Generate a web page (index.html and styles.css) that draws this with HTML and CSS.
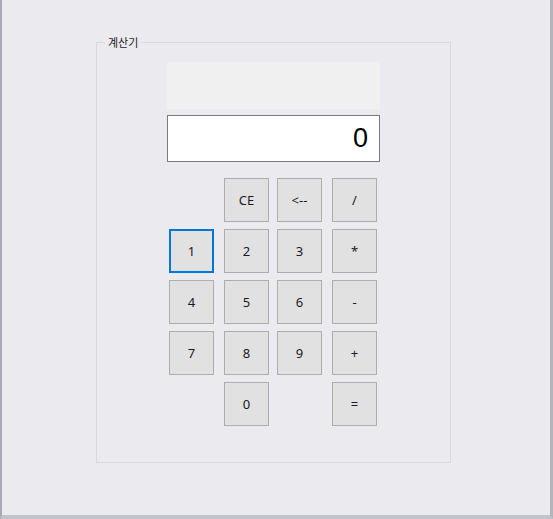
FILE: index.html
```html
<!DOCTYPE html>
<html lang="ko">

<head>
    <meta charset="UTF-8">
    <meta name="viewport" content="width=device-width, initial-scale=1.0">
    <title>계산기</title>
    <link rel="stylesheet" href="styles.css">
</head>

<body>
    <div class="window">
        <div class="group">
            <span class="group-title">계산기</span>
            <div class="expr"></div>
            <div class="result">0</div>
            <div class="keys">
                <span></span>
                <button>CE</button>
                <button>&lt;--</button>
                <button>/</button>

                <button class="focus">1</button>
                <button>2</button>
                <button>3</button>
                <button>*</button>

                <button>4</button>
                <button>5</button>
                <button>6</button>
                <button>-</button>

                <button>7</button>
                <button>8</button>
                <button>9</button>
                <button>+</button>

                <span></span>
                <button>0</button>
                <span></span>
                <button>=</button>
            </div>
        </div>
    </div>
</body>

</html>
```

FILE: styles.css
```css
body {
    margin: 0;
    padding: 0;
    font-family: 'Liberation Sans', 'DejaVu Sans', 'Noto Sans CJK KR', sans-serif;
    background: #ebebef;
}

.window {
    width: 553px;
    height: 519px;
    box-sizing: border-box;
    background: #ebebef;
    border-left: 2px solid #a9a9b1;
    border-right: 3px solid #b4b4bc;
    border-bottom: 4px solid #c3c3cb;
    padding-top: 42px;
    padding-left: 94px;
}

.group {
    position: relative;
    width: 355px;
    height: 421px;
    box-sizing: border-box;
    border: 1px solid #dadadd;
    padding: 19px 0 0 70px;
}

.group-title {
    position: absolute;
    top: -8px;
    left: 8px;
    padding: 0 3px;
    background: #ebebef;
    font-family: 'Noto Sans CJK KR', sans-serif;
    font-size: 11px;
    line-height: 14px;
    color: #1e1e1e;
}

.expr {
    width: 213px;
    height: 47px;
    background: #f0f0f0;
}

.result {
    width: 213px;
    height: 47px;
    box-sizing: border-box;
    margin-top: 6px;
    background: #fff;
    border: 1px solid #7a7a7a;
    text-align: right;
    padding-right: 11px;
    font-size: 27px;
    line-height: 44px;
    color: #000;
}

.keys {
    display: grid;
    grid-template-columns: 55px 53px 55px 45px;
    grid-auto-rows: 44px;
    row-gap: 7px;
    margin-top: 16px;
    margin-left: 2px;
}

.keys button {
    width: 45px;
    height: 44px;
    margin: 0;
    padding: 0;
    background: #e1e1e1;
    border: 1px solid #adadad;
    font-family: 'Noto Sans', 'DejaVu Sans', sans-serif;
    font-size: 13px;
    color: #1a1a2a;
}

.keys .focus {
    border: 2px solid #0078d7;
}
```
